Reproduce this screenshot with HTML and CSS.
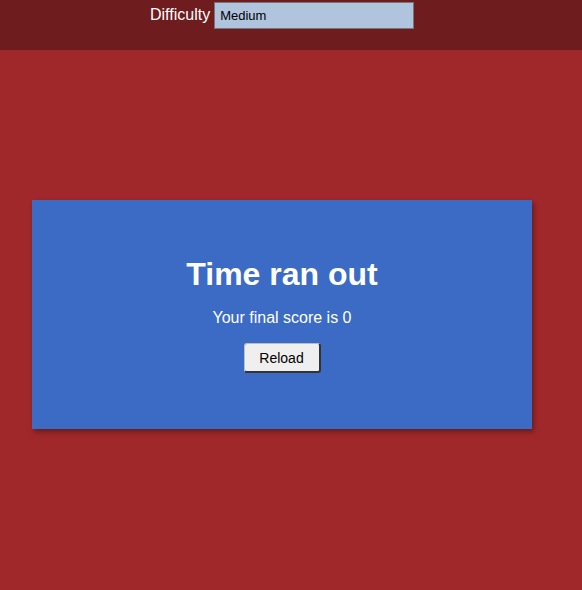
FILE: index.html
```html
<!DOCTYPE html>
<html>
<head>
<meta charset="utf-8">
<link rel="stylesheet" href="styles.css">
</head>
<body>
<header class="topbar">
  <label class="diff-label" for="diff">Difficulty</label>
  <input class="diff-input" id="diff" type="text" value="Medium">
</header>
<main class="stage">
  <section class="card">
    <h1 class="card-title">Time ran out</h1>
    <p class="card-text">Your final score is 0</p>
    <button class="reload-btn">Reload</button>
  </section>
</main>
</body>
</html>
```
FILE: styles.css
```css
html, body {
  margin: 0;
  padding: 0;
}
body {
  background: #a0282a;
  font-family: "Liberation Sans", Arial, sans-serif;
  width: 582px;
  height: 590px;
  overflow: hidden;
}
.topbar {
  height: 50px;
  background: #6f1c1f;
  display: flex;
  align-items: flex-start;
  padding-left: 150px;
  box-sizing: border-box;
}
.diff-label {
  color: #ffffff;
  font-size: 16px;
  line-height: 16px;
  margin-top: 7px;
  margin-right: 4px;
}
.diff-input {
  width: 200px;
  height: 27px;
  box-sizing: border-box;
  margin: 2px 0 0 0;
  background: #b0c4de;
  border: 1px solid #767676;
  font-family: "Liberation Sans", Arial, sans-serif;
  font-size: 13px;
  color: #000;
  padding: 1px 5px;
}
.stage {
  padding: 150px 0 0 32px;
}
.card {
  width: 500px;
  height: 229px;
  box-sizing: border-box;
  background: #3b6bc5;
  box-shadow: 2px 3px 5px rgba(0,0,0,0.35);
  display: flex;
  flex-direction: column;
  align-items: center;
  padding-top: 56px;
}
.card-title {
  margin: 0;
  color: #fff;
  font-size: 32px;
  line-height: 37px;
  font-weight: bold;
}
.card-text {
  margin: 16px 0 0 0;
  color: #fff;
  font-size: 16px;
  line-height: 18px;
}
.reload-btn {
  margin-top: 16px;
  width: 77px;
  height: 30px;
  padding: 0;
  font-family: "Liberation Sans", Arial, sans-serif;
  font-size: 14px;
  background: #efefef;
  color: #000;
  border-style: solid;
  border-width: 1px 2px 2px 1px;
  border-radius: 3px;
  border-color: #bdbdbd #333 #333 #bdbdbd;
}
```
